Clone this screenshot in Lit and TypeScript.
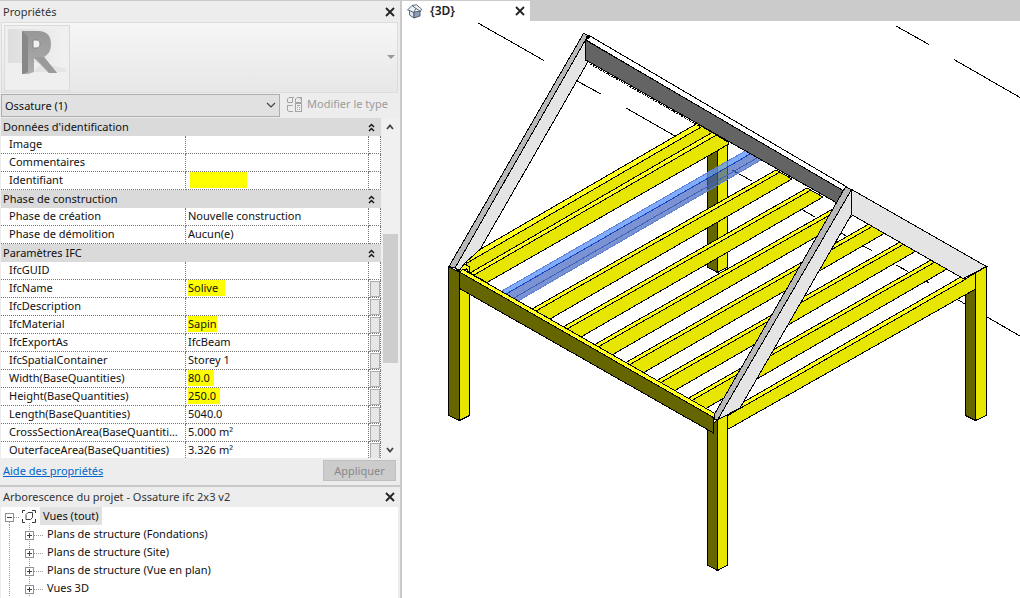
import { LitElement, html, css, svg, nothing } from "lit";
import { customElement } from "lit/decorators.js";

type Pt = [number, number];
interface Row { name: string; value?: string; mark?: string; button?: boolean }
interface Group { title: string; rows: Row[] }

const groups: Group[] = [
  {
    title: "Données d'identification",
    rows: [
      { name: "Image" },
      { name: "Commentaires" },
      { name: "Identifiant", value: "", mark: "blank" },
    ],
  },
  {
    title: "Phase de construction",
    rows: [
      { name: "Phase de création", value: "Nouvelle construction" },
      { name: "Phase de démolition", value: "Aucun(e)" },
    ],
  },
  {
    title: "Paramètres IFC",
    rows: [
      { name: "IfcGUID" },
      { name: "IfcName", value: "Solive", mark: "wide", button: true },
      { name: "IfcDescription", button: true },
      { name: "IfcMaterial", value: "Sapin", mark: "tight", button: true },
      { name: "IfcExportAs", value: "IfcBeam", button: true },
      { name: "IfcSpatialContainer", value: "Storey 1", button: true },
      { name: "Width(BaseQuantities)", value: "80.0", mark: "number", button: true },
      { name: "Height(BaseQuantities)", value: "250.0", mark: "number", button: true },
      { name: "Length(BaseQuantities)", value: "5040.0", button: true },
      { name: "CrossSectionArea(BaseQuantities)", value: "5.000 m²", button: true },
      { name: "OuterfaceArea(BaseQuantities)", value: "3.326 m²", button: true },
    ],
  },
];

const views = [
  "Plans de structure (Fondations)",
  "Plans de structure (Site)",
  "Plans de structure (Vue en plan)",
  "Vues 3D",
];

const closeIcon = html`<svg width="10" height="10" viewBox="0 0 10 10" aria-hidden="true">
  <path d="M1 1L9 9M9 1L1 9" fill="none" stroke="#222" stroke-width="1.8" /></svg>`;

@customElement("properties-panel")
export class PropertiesPanel extends LitElement {
  static styles = css`
    :host { display: block; background: #ededed; color: #111; }
    button, select { font: inherit; color: inherit; margin: 0; padding: 0; border: 0; background: none; border-radius: 0; }
    svg { display: block; }
    .title { display: flex; align-items: center; justify-content: space-between; height: 21px; padding: 0 5px 0 3px; color: #333; }
    .title h2 { margin: 0; font: inherit; }
    .type { display: flex; align-items: center; justify-content: space-between; width: calc(100% - 3px); height: 71px; padding: 1px 2px; margin: 0 2px 1px 1px;
      background: linear-gradient(#f6f6f6, #e7e7e7); border: 1px solid #dcdcdc; box-sizing: border-box; }
    .preview { border: 1px solid #dadada; }
    .bar { display: grid; grid-template-columns: 280px 1fr; align-items: start; height: 24px; padding-left: 1px; }
    .combo { display: grid; align-items: center; width: 279px; }
    .combo > * { grid-area: 1 / 1; }
    .combo select { appearance: none; height: 23px; padding: 0 3px; background: #e1e1e1; border: 1px solid #adadad; }
    .combo svg { justify-self: end; margin-right: 4px; pointer-events: none; }
    .edit { display: flex; align-items: center; gap: 4px; height: 20px; padding-left: 5px; color: #9b9b9b; white-space: nowrap; }
    .grid { display: grid; grid-template-columns: 1fr 19px; height: 340px; overflow: hidden; padding-left: 1px; }
    table { width: 100%; border-collapse: separate; border-spacing: 0; table-layout: fixed; background: #fff; }
    .c1 { width: 185px; } .c3 { width: 12px; }
    .frame { height: 340px; overflow: hidden; }
    th, td { box-sizing: border-box; height: 18px; padding: 0; font-weight: 400; text-align: left; line-height: 16px; white-space: nowrap; overflow: hidden; text-overflow: ellipsis; }
    .row th, .row td { border-bottom: 1px dotted #777; border-right: 1px dotted #777; }
    .row th { padding: 0 3px 1px 8px; }
    .row td { padding-left: 2px; padding-bottom: 1px; }
    .row .more { padding: 1px 0 0 1px; line-height: 0; text-overflow: clip; }
    .more button { display: block; width: 10px; height: 16px; background: #e6e6e6; border: 1px solid #adadad; }
    .head { background: #dadada; }
    .fold { display: flex; align-items: center; justify-content: space-between; width: 100%; height: 18px; padding: 0 6px 0 2px; }
    mark { display: inline-block; height: 16px; background: #ff0; color: inherit; vertical-align: top; }
    .wide { padding-right: 7px; } .number { padding-right: 4px; }
    .blank { width: 57px; margin-left: 2px; }
    .scroll { display: flex; flex-direction: column; align-items: center; justify-content: space-between; background: #f0f0f0; padding: 6px 1px 5px 0; }
    .rail { flex: 1; display: grid; grid-template-rows: 104fr 128fr 84fr; }
    .thumb { grid-row: 2; width: 15px; background: #cdcdcd; }
    .foot { display: flex; align-items: center; justify-content: space-between; box-sizing: border-box; height: 27px; padding: 0 4px 2px 3px; }
    .foot a { color: #0066cc; }
    .foot button { width: 73px; height: 21px; color: #888; background: #ccc; border: 1px solid #bfbfbf; }
  `;

  private row(r: Row) {
    const value = r.mark ? html`<mark class=${r.mark}>${r.value}</mark>` : r.value ?? nothing;
    return html`<tr class="row">
      <th scope="row">${r.name}</th>
      <td>${value}</td>
      <td class="more">${r.button ? html`<button aria-label="Associer ${r.name}"></button>` : nothing}</td>
    </tr>`;
  }

  render() {
    return html`
      <div class="title"><h2>Propriétés</h2><button aria-label="Fermer">${closeIcon}</button></div>
      <button class="type" aria-label="Sélecteur de type">
        <svg class="preview" width="64" height="64" viewBox="0 0 64 64">
          <defs>
            <linearGradient id="wall" x1="0" x2="1"><stop offset="0" stop-color="#dedede" /><stop offset="1" stop-color="#f1f1f1" /></linearGradient>
            <linearGradient id="bowl" y1="0" y2="1" x2="0"><stop offset="0" stop-color="#979797" /><stop offset="1" stop-color="#aeaeae" /></linearGradient>
          </defs>
          <rect width="64" height="64" fill="#efefef" />
          <rect x="3" y="3" width="58" height="34" fill="url(#wall)" />
          <path d="M28 46L38 37L61 43V46Z" fill="#e4e4e4" />
          <path fill-rule="evenodd" fill="url(#bowl)" d="M17 5H33C42 5 46 10 46 18C46 25 43 29 39 31L52 47H44L29 32V46L23 48H17ZM28 14V22H32C36 21 36 15 32 14Z" />
          <path d="M17 5L23 11V46L18 48H17Z" fill="#888" />
          <path d="M28 14H32C36 15 36 21 32 22H28Z" fill="#f2f2f2" stroke="#858585" />
          <path d="M27 31L39 31L52 47L44 47L32 33Z" fill="#9a9a9a" />
        </svg>
        <svg width="8" height="5" viewBox="0 0 8 5"><path d="M0 0H8L4 4Z" fill="#999" /></svg>
      </button>
      <div class="bar">
        <div class="combo">
          <select aria-label="Filtre de sélection"><option>Ossature (1)</option></select>
          <svg width="10" height="7" viewBox="0 0 10 7"><path d="M1 1L5 5L9 1" fill="none" stroke="#444" stroke-width="1.2" /></svg>
        </div>
        <button class="edit">
          <svg width="17" height="17" viewBox="0 0 17 17" fill="none" stroke="#a3a3a3">
            <path d="M1.500 6V3L3 1.500H6.500V6.500H1.500M6.500 1.500H8M9.500 6.500V3L11 1.500H15.500V6.500H9.500M15.500 1.500L13.500 3.500M1.500 9.500H6.500M1.500 9V14.500L3 15.500H7" />
            <rect x="9.500" y="7.500" width="6" height="8" fill="#f0f0f0" /><path d="M11 9.500H14M11 11.500H12M13 11.500H14M11 13.500H12M13 13.500H14" />
          </svg>
          <span>Modifier le type</span>
        </button>
      </div>
      <div class="grid">
        <div class="frame">
          <table>
            <colgroup><col class="c1" /><col /><col class="c3" /></colgroup>
            ${groups.map((g) => html`<tbody>
              <tr><th class="head" colspan="3" scope="rowgroup">
                <button class="fold" aria-expanded="true"><span>${g.title}</span>
                  <svg width="7" height="9" viewBox="0 0 7 9"><path d="M1 4L3.500 1.500L6 4M1 8L3.500 5.500L6 8" fill="none" stroke="#111" stroke-width="1.400" /></svg>
                </button></th></tr>
              ${g.rows.map((r) => this.row(r))}
            </tbody>`)}
          </table>
        </div>
        <div class="scroll">
          <svg width="8" height="6" viewBox="0 0 8 6"><path d="M1 5L4 1.500L7 5" fill="none" stroke="#444" stroke-width="1.800" /></svg>
          <div class="rail"><div class="thumb"></div></div>
          <svg width="8" height="6" viewBox="0 0 8 6"><path d="M1 1L4 4.500L7 1" fill="none" stroke="#444" stroke-width="1.800" /></svg>
        </div>
      </div>
      <div class="foot"><a href="#aide">Aide des propriétés</a><button disabled>Appliquer</button></div>
    `;
  }
}

@customElement("project-browser")
export class ProjectBrowser extends LitElement {
  static styles = css`
    :host { display: flex; flex-direction: column; background: #ededed; border-top: 2px solid #c9c9c9; color: #111; overflow: hidden; }
    button { font: inherit; margin: 0; padding: 0; border: 0; background: none; }
    svg { display: block; }
    .title { display: flex; align-items: center; justify-content: space-between; height: 20px; padding: 0 5px 0 3px; color: #333; }
    .title h2 { margin: 0; font: inherit; }
    ul { list-style: none; margin: 0; padding: 0; }
    .tree { flex: 1; margin: 0 2px 0 1px; background: #fff; }
    .item { display: flex; align-items: center; height: 18px; }
    .root { background: #e1e1e1; padding: 0 3px; line-height: 18px; }
  `;

  render() {
    return html`
      <div class="title"><h2>Arborescence du projet - Ossature ifc 2x3 v2</h2><button aria-label="Fermer">${closeIcon}</button></div>
      <ul class="tree">
        <li>
          <div class="item">
            <button aria-label="Réduire Vues (tout)">
              <svg width="39" height="18" viewBox="0 0 39 18" fill="none">
                <path d="M13 10.500H19M8.500 15V18M28.500 16V18" stroke="#999" stroke-dasharray="1 1" />
                <rect x="4.500" y="6.500" width="8" height="8" fill="#fff" stroke="#919191" /><path d="M6 10.500H11" stroke="#345" />
                <path d="M21.500 6V3.500H24M31 3.500H34.500V6M34.500 12V15.500H31M24 15.500H21.500V12" stroke="#333" />
                <path d="M25 7.500L27 5.500H31.500V10.500L29.500 12.500H25Z" stroke="#444" />
              </svg>
            </button>
            <span class="root">Vues (tout)</span>
          </div>
          <ul>
            ${views.map((v) => html`<li class="item">
              <button aria-label="Développer ${v}">
                <svg width="46" height="18" viewBox="0 0 46 18" fill="none">
                  <path d="M8.500 0V18M28.500 0V18M33 10.500H43" stroke="#999" stroke-dasharray="1 1" />
                  <rect x="24.500" y="6.500" width="8" height="8" fill="#fff" stroke="#919191" /><path d="M26 10.500H31M28.500 8V13" stroke="#345" />
                </svg>
              </button><span>${v}</span></li>`)}
          </ul>
        </li>
      </ul>`;
  }
}

const poly = (fill: string, ...p: Pt[]) => svg`<polygon points=${p.map((q) => q.join(",")).join(" ")} fill=${fill} />`;

/* A floor joist whose upper edge starts at (x, y) on the left beam. */
const joist = (x: number, y: number) => svg`
  ${poly("#e6e600", [x, y], [x + 244, y - 139], [x + 260, y - 130], [x + 18, y + 10])}
  ${poly("#ffff1a", [x, y], [x + 244, y - 139], [x + 248, y - 137], [x + 4, y + 2])}`;

@customElement("model-view")
export class ModelView extends LitElement {
  static styles = css`
    :host { display: flex; flex-direction: column; min-width: 0; background: #fff; }
    button { font: inherit; margin: 0; padding: 0; border: 0; background: none; }
    .tabs { display: flex; height: 21px; background: #cbcbcb; }
    .tab { display: flex; align-items: center; width: 118px; margin-top: 1px; padding: 0 5px; background: #fff; color: #222; font-size: 12px; font-weight: 600; }
    .tab span { flex: 1; padding-left: 8px; }
    .tab svg, .scene { display: block; }
    .canvas { flex: 1; min-height: 0; }
    .scene { width: 100%; height: 100%; }
  `;

  render() {
    const joists: Pt[] = [0, 1, 2, 3, 4, 5].map((i) => [532 + 31 * i, 309 + 18 * i]);
    return html`
      <div class="tabs">
        <div class="tab">
          <svg width="15" height="15" viewBox="0 0 15 15" stroke="#39465a" stroke-width=".8" stroke-linejoin="round">
            <path d="M2.500 6V11L7 14V8Z" fill="#dfe6ee" /><path d="M7 8V14L13 12V7Z" fill="#8f9fb3" />
            <path d="M.5 6L5 1.500L9.500 .8L14.500 5L13.500 7.500L9 4.500L6.500 8.500L2.500 6.500Z" fill="#eef2f6" /><path d="M5 1.500L9 4.500" />
          </svg>
          <span>{3D}</span>
          <button aria-label="Fermer la vue">${closeIcon}</button>
        </div>
      </div>
      <div class="canvas">
        <svg class="scene" viewBox="402 21 618 577" preserveAspectRatio="xMinYMin meet" role="img" aria-label="Vue 3D de l'ossature"
          stroke="#000" stroke-width="1" shape-rendering="crispEdges">
          <path fill="none" d="M478 23L544 60.500M577 81L601 94M626 108L675 136M732 170L752 181M801 209L815 217M838 231L846 236M863 246L872 250.500M896 265L908 271.500M923 279L929 283M955 298L965 304M987 317L1020 336M896 26L929 44.500M954 59.500L1020 97.500" />

          ${poly("#666600", [707.5, 150], [717.5, 146], [717.5, 272.500], [707.5, 267])}
          ${poly("#e6e600", [717.5, 146], [727.5, 140], [727.5, 267], [717.5, 272.500])}

          ${poly("#e6e600", [466, 262], [480, 249.500], [697, 123.500], [712, 132.500], [470, 273])}
          ${poly("#ffff1a", [466, 262], [480, 249.500], [697, 123.500], [702, 126.500], [467, 263])}
          ${poly("#e6e600", [470, 273], [712, 132.500], [728, 142], [728, 144.500], [487, 282.500])}
          ${poly("#ffff1a", [470, 273], [712, 132.500], [716.5, 135], [474, 275])}

          ${joists.map(([x, y]) => joist(x, y))}

          <g stroke="none">
            ${poly("rgba(60,95,190,.68)", [506, 294], [751, 153.500], [761, 160], [518, 301])}
            ${poly("rgba(95,150,255,.78)", [501, 291.500], [746, 150.500], [751, 153.500], [506, 294])}
            <path d="M501 291.500L746 150.500M518 301L761 160" fill="none" stroke="#5b80d6" />
            <path d="M506 294L751 153.500" fill="none" stroke="#1443bd" />
            <path d="M514 298L757 158" fill="none" stroke="#3f63bb" />
          </g>

          ${poly("#666600", [448.5, 267], [459.5, 272], [459.5, 420.500], [448.5, 415.500])}
          ${poly("#e6e600", [459.5, 272], [469.5, 278], [469.5, 415.500], [459.5, 420.500])}
          ${poly("#ffff1a", [455, 268], [464.5, 264], [469.5, 267], [469.5, 273], [466.5, 269], [459.5, 272])}

          ${poly("#666600", [707.5, 428], [717.5, 420], [717.5, 570.500], [707.5, 565])}
          ${poly("#e6e600", [717.5, 420], [727.5, 414], [727.5, 565], [717.5, 570.500])}
          ${poly("#666600", [459.5, 272], [713.5, 417], [713.5, 433], [459.5, 288.500])}
          ${poly("#ffff1a", [459.5, 272], [463, 269.500], [715, 413.500], [717, 419], [713.5, 417.500])}

          ${poly("#666600", [965.5, 292], [975.5, 287], [975.5, 420.500], [965.5, 415.500])}
          ${poly("#e6e600", [727.5, 416], [741, 407.500], [975.5, 273], [975.5, 289], [727.5, 429.500])}
          ${poly("#ffff1a", [741, 403.500], [960, 277.500], [966, 279], [740, 408.500])}
          ${poly("#e6e600", [975.5, 273], [986.5, 266.500], [986.5, 415.500], [975.5, 420.500])}

          ${poly("#e4e4e4", [851.5, 189.500], [986.5, 266.500], [963, 278.500], [851.5, 214.500])}

          ${poly("#fff", [586, 40], [590, 36], [847, 187], [843, 191])}
          ${poly("#646464", [585.5, 40], [843, 190.500], [837, 203], [587.5, 61], [585.5, 60])}
          <path d="M590 64L700 126.500" fill="none" stroke-dasharray="2 1" />
          ${poly("#e4e4e4", [585.5, 40], [585.5, 60], [588, 61.500], [480, 249.500], [466, 262], [459.5, 270], [455, 268])}
          ${poly("#b9b9b9", [583.5, 33.500], [590, 36], [585.5, 40], [455, 268], [449, 266.500])}
          <path d="M586 36L591 36L586 40Z" fill="#000" />

          ${poly("#e4e4e4", [851.5, 189.500], [851.5, 214.500], [740, 408], [717.5, 420])}
          ${poly("#b9b9b9", [845.5, 187], [851.5, 189.500], [717.5, 420], [714, 419], [714, 415])}
        </svg>
      </div>`;
  }
}

@customElement("app-root")
export class AppRoot extends LitElement {
  static styles = css`
    :host { display: grid; grid-template-columns: 400px 1fr; height: 100vh; overflow: hidden; font: 11px/16px "Noto Sans", "Open Sans", sans-serif; }
    .side { display: flex; flex-direction: column; min-height: 0; border-top: 1px solid #c9c9c9; background: #ededed; }
    .browser { flex: 1; min-height: 0; }
    .view { border-left: 2px solid #c9c9c9; }
  `;

  render() {
    return html`
      <div class="side">
        <properties-panel></properties-panel>
        <project-browser class="browser"></project-browser>
      </div>
      <model-view class="view"></model-view>`;
  }
}
